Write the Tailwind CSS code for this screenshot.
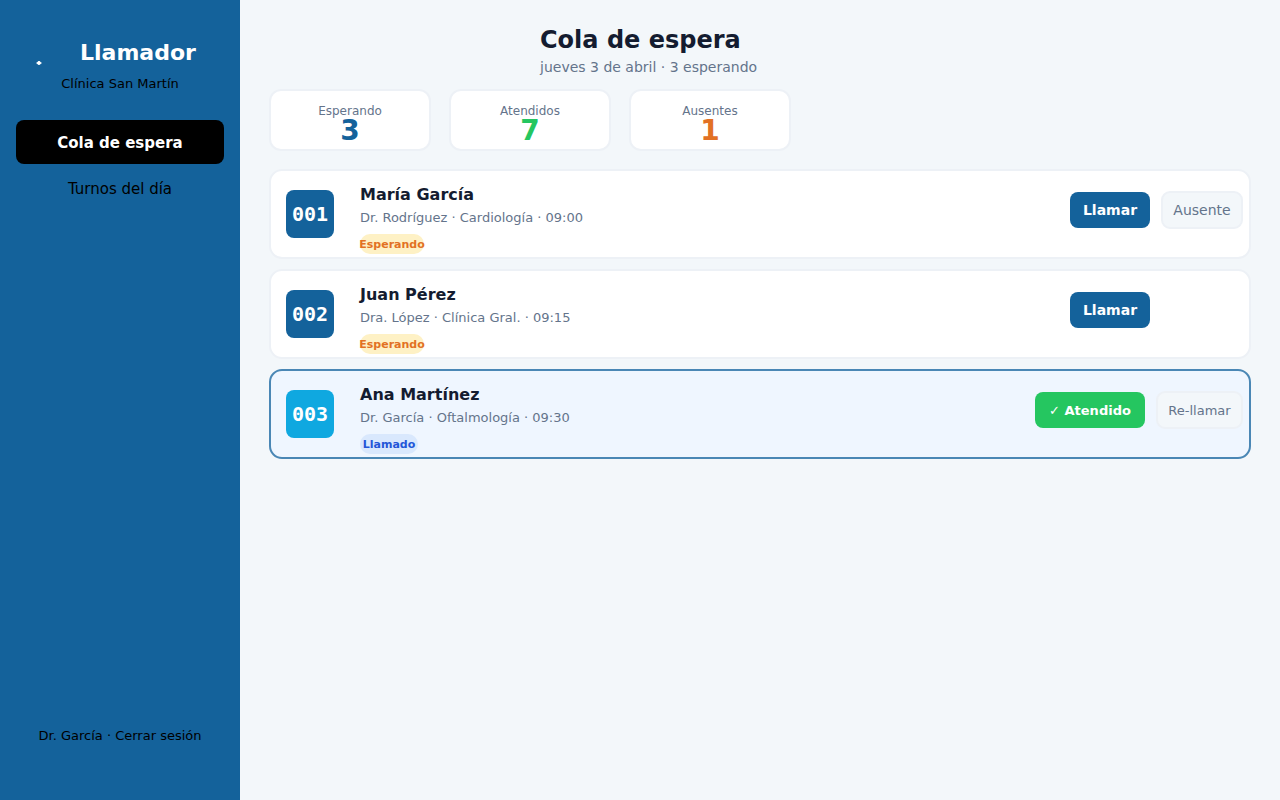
<!DOCTYPE html>
<html lang="es">
<head>
<meta charset="utf-8">
<meta name="viewport" content="width=device-width, initial-scale=1">
<title>Llamador · Cola de espera</title>
<script src="https://cdn.jsdelivr.net/npm/@tailwindcss/browser@4"></script>
</head>
<body class="flex min-h-screen bg-[#f3f7fa] font-['DejaVu_Sans',sans-serif] text-[#141c30]">
  <aside class="flex w-60 shrink-0 flex-col bg-[#14629b] px-4 pt-[37px] pb-[54px] text-center text-black">
    <div class="flex h-8 items-center pl-5">
      <svg class="h-8 w-[6px] shrink-0" viewBox="0 0 6 32" aria-hidden="true">
        <path d="M3 24 C3.8 24 4.3 24.5 4.5 25.1 L6 26 L4.6 26.9 Q4 28 3 28 Q2 28 1.4 26.9 L0 26 L1.5 25.1 C1.7 24.5 2.2 24 3 24 Z" fill="#fff"/>
      </svg>
      <p class="ml-[38px] text-[22px] leading-8 font-bold text-white">Llamador</p>
    </div>
    <p class="mt-[5px] text-[13px] leading-5">Clínica San Martín</p>
    <nav class="mt-[26px] flex flex-col gap-[3px] text-[15px]">
      <a href="#cola" aria-current="page" class="flex h-11 items-center justify-center rounded-lg bg-black pt-[2px] font-bold text-white">Cola de espera</a>
      <a href="#turnos" class="flex h-11 items-center justify-center rounded-lg">Turnos del día</a>
    </nav>
    <a href="#salir" class="mt-auto text-[13px] leading-5">Dr. García · Cerrar sesión</a>
  </aside>

  <main class="min-w-0 flex-1 px-[29px] pt-6">
    <header class="pl-[271px]">
      <h1 class="text-2xl leading-8 font-bold">Cola de espera</h1>
      <p class="text-sm leading-[22px] text-[#64748b]">jueves 3 de abril · 3 esperando</p>
    </header>

    <section class="mt-[11px] flex gap-[18px] text-center" aria-label="Resumen">
      <div class="w-[162px] rounded-xl border-2 border-[#edf1f6] bg-white pt-3 pb-1.5">
        <p class="text-xs leading-4 text-[#64748b]">Esperando</p>
        <p class="text-[28px] leading-6 font-bold text-[#14629b]">3</p>
      </div>
      <div class="w-[162px] rounded-xl border-2 border-[#edf1f6] bg-white pt-3 pb-1.5">
        <p class="text-xs leading-4 text-[#64748b]">Atendidos</p>
        <p class="text-[28px] leading-6 font-bold text-[#25c660]">7</p>
      </div>
      <div class="w-[162px] rounded-xl border-2 border-[#edf1f6] bg-white pt-3 pb-1.5">
        <p class="text-xs leading-4 text-[#64748b]">Ausentes</p>
        <p class="text-[28px] leading-6 font-bold text-[#e27124]">1</p>
      </div>
    </section>

    <ul class="mt-[18px] flex flex-col gap-[10px]">
      <li class="flex items-start rounded-[13px] border-2 border-[#edf1f6] bg-white pr-[6px] pb-[3px] pl-[15px]">
        <span class="mt-[19px] flex size-12 items-center justify-center rounded-lg bg-[#14629b] font-['DejaVu_Sans_Mono',monospace] text-xl font-bold text-white">001</span>
        <div class="ml-[26px] flex-1 pt-3">
          <h2 class="text-base leading-6 font-bold">María García</h2>
          <p class="text-[13px] leading-[22px] text-[#64748b]">Dr. Rodríguez · Cardiología · 09:00</p>
          <span class="mt-[5px] flex h-5 w-16 items-center justify-center rounded-full bg-[#fef1c5] pt-[2px] text-[11px] font-bold text-[#e27124]">Esperando</span>
        </div>
        <div class="flex items-center gap-[11px] pt-5">
          <button type="button" class="h-9 w-20 rounded-lg bg-[#14629b] text-sm font-bold text-white">Llamar</button>
          <button type="button" class="h-[38px] w-[82px] rounded-[9px] border-2 border-[#edf1f6] bg-[#f3f7fa] text-sm text-[#64748b]">Ausente</button>
        </div>
      </li>
      <li class="flex items-start rounded-[13px] border-2 border-[#edf1f6] bg-white pr-[99px] pb-[3px] pl-[15px]">
        <span class="mt-[19px] flex size-12 items-center justify-center rounded-lg bg-[#14629b] font-['DejaVu_Sans_Mono',monospace] text-xl font-bold text-white">002</span>
        <div class="ml-[26px] flex-1 pt-3">
          <h2 class="text-base leading-6 font-bold">Juan Pérez</h2>
          <p class="text-[13px] leading-[22px] text-[#64748b]">Dra. López · Clínica Gral. · 09:15</p>
          <span class="mt-[5px] flex h-5 w-16 items-center justify-center rounded-full bg-[#fef1c5] pt-[2px] text-[11px] font-bold text-[#e27124]">Esperando</span>
        </div>
        <div class="flex h-[58px] items-center pt-5">
          <button type="button" class="h-9 w-20 rounded-lg bg-[#14629b] text-sm font-bold text-white">Llamar</button>
        </div>
      </li>
      <li class="flex items-start rounded-[13px] border-2 border-[#4a87b5] bg-[#eff6ff] pr-[6px] pb-[3px] pl-[15px]">
        <span class="mt-[19px] flex size-12 items-center justify-center rounded-lg bg-[#0fa8e0] font-['DejaVu_Sans_Mono',monospace] text-xl font-bold text-white">003</span>
        <div class="ml-[26px] flex-1 pt-3">
          <h2 class="text-base leading-6 font-bold">Ana Martínez</h2>
          <p class="text-[13px] leading-[22px] text-[#64748b]">Dr. García · Oftalmología · 09:30</p>
          <span class="mt-[5px] flex h-5 w-[58px] items-center justify-center rounded-full bg-[#d9e8fd] pt-[2px] text-[11px] font-bold text-[#2456d8]">Llamado</span>
        </div>
        <div class="flex items-center gap-[11px] pt-5">
          <button type="button" class="h-9 w-[110px] rounded-lg bg-[#25c660] pt-[2px] text-[13px] font-bold text-white">✓ Atendido</button>
          <button type="button" class="h-[38px] w-[87px] rounded-[9px] border-2 border-[#edf1f6] bg-[#f3f7fa] pt-[2px] text-[13px] text-[#64748b]">Re-llamar</button>
        </div>
      </li>
    </ul>
  </main>
</body>
</html>
